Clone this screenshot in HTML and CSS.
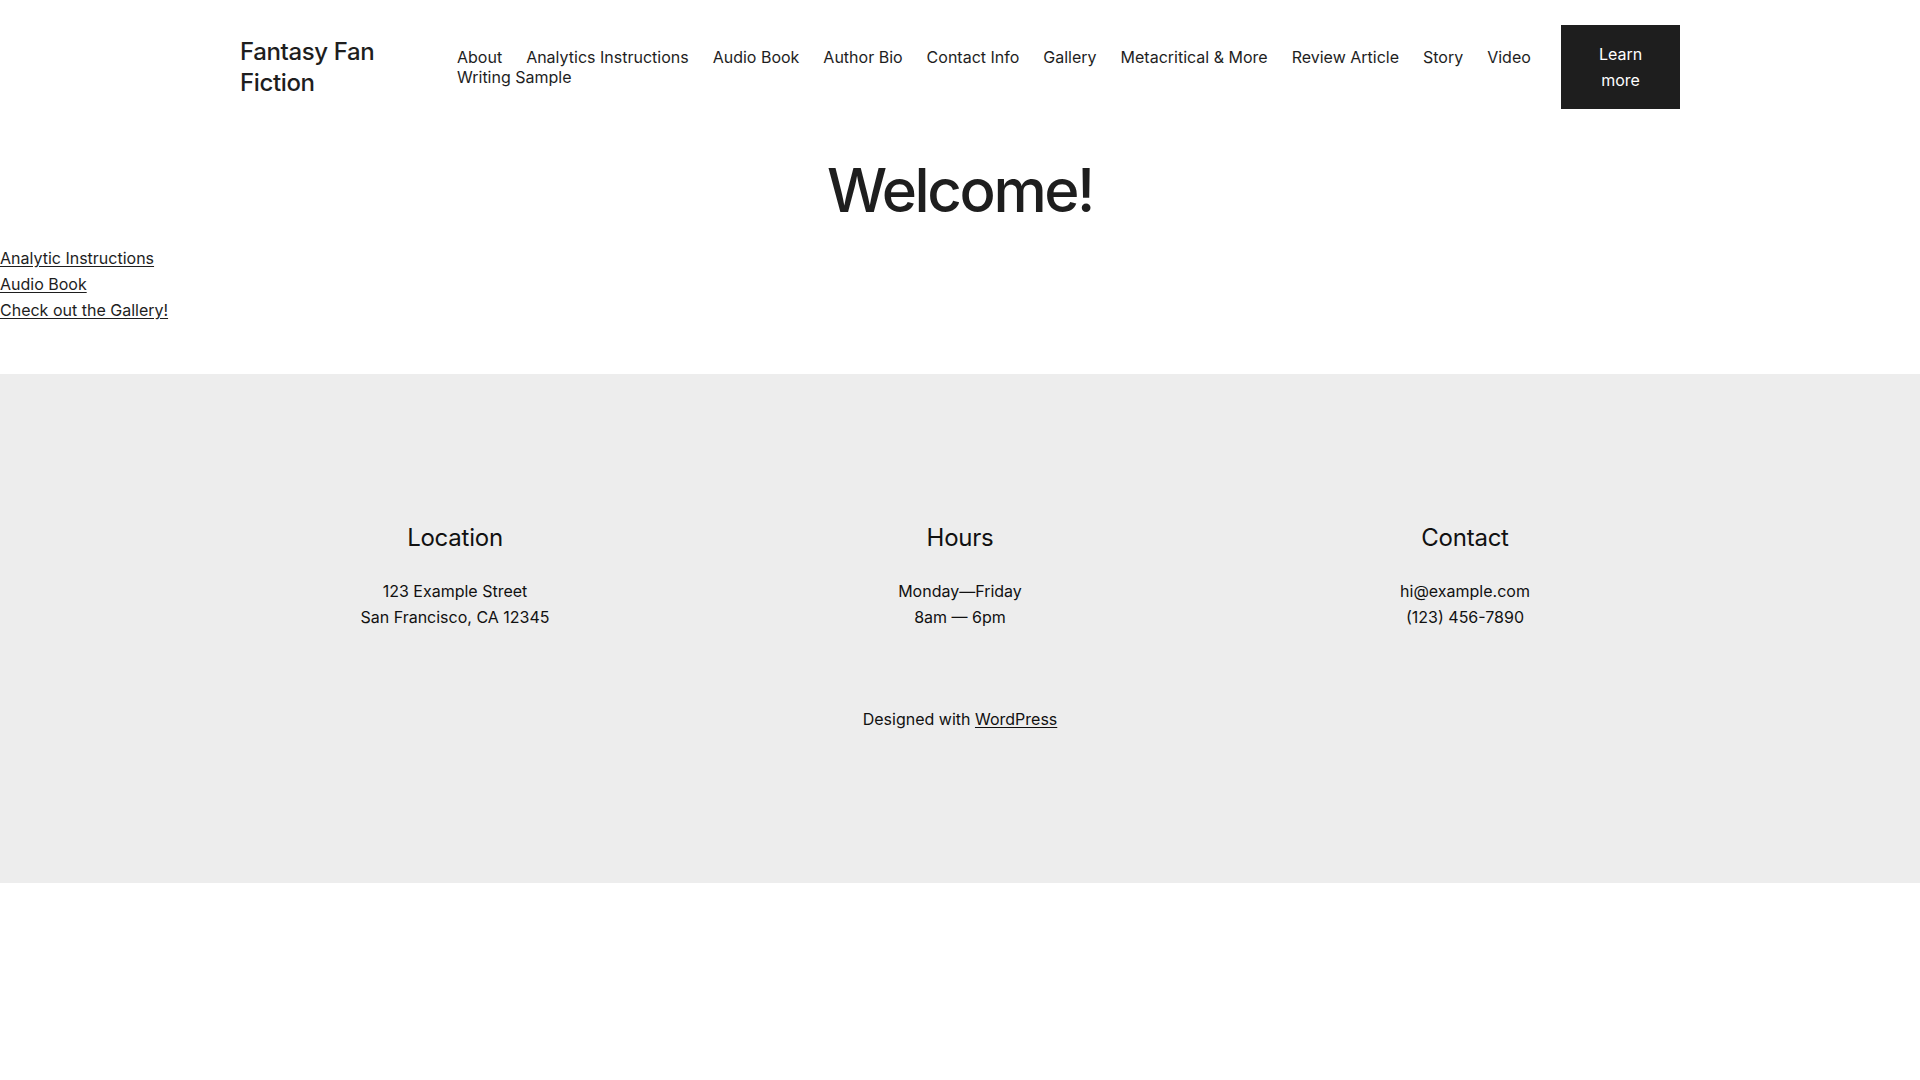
FILE: index.html
```html
<!DOCTYPE html>
<html lang="en">
<head>
<meta charset="utf-8">
<title>Fantasy Fan Fiction</title>
<link rel="stylesheet" href="styles.css">
</head>
<body>
<header class="site-header">
  <div class="header-inner">
    <a class="site-title" href="#">Fantasy Fan Fiction</a>
    <nav class="main-nav">
      <a href="#">About</a>
      <a href="#">Analytics Instructions</a>
      <a href="#">Audio Book</a>
      <a href="#">Author Bio</a>
      <a href="#">Contact Info</a>
      <a href="#">Gallery</a>
      <a href="#">Metacritical &amp; More</a>
      <a href="#">Review Article</a>
      <a href="#">Story</a>
      <a href="#">Video</a>
      <a href="#">Writing Sample</a>
    </nav>
    <a class="btn" href="#">Learn more</a>
  </div>
</header>
<main class="content">
  <h1 class="welcome">Welcome!</h1>
  <div class="link-list">
    <a href="#">Analytic Instructions</a>
    <a href="#">Audio Book</a>
    <a href="#">Check out the Gallery!</a>
  </div>
</main>
<footer class="site-footer">
  <div class="footer-cols">
    <div class="col">
      <h2>Location</h2>
      <p>123 Example Street<br>San Francisco, CA 12345</p>
    </div>
    <div class="col">
      <h2>Hours</h2>
      <p>Monday—Friday<br>8am — 6pm</p>
    </div>
    <div class="col">
      <h2>Contact</h2>
      <p>hi@example.com<br>(123) 456-7890</p>
    </div>
  </div>
  <p class="credit">Designed with <a href="#">WordPress</a></p>
</footer>
</body>
</html>
```
FILE: styles.css
```css
* { box-sizing: border-box; }
html, body { margin: 0; padding: 0; }
body {
  font-family: Inter, "Noto Sans", sans-serif;
  color: #1e1e1e;
  background: #fff;
  font-size: 16px;
  line-height: 1.6;
}
a { color: inherit; }

.site-header { padding: 25px 0 25px; }
.header-inner {
  width: 1440px;
  margin: 0 auto;
  display: flex;
  align-items: center;
}
.site-title {
  flex: 0 0 217px;
  width: 217px;
  padding-right: 60px;
  font-size: 24px;
  line-height: 31px;
  font-weight: 500;
  letter-spacing: -0.015em;
  text-decoration: none;
  color: #1e1e1e;
}
.main-nav {
  flex: 1 1 auto;
  display: flex;
  flex-wrap: wrap;
  column-gap: 24px;
  row-gap: 0;
  margin-right: 20px;
  font-size: 16px;
  line-height: 20px;
}
.main-nav a { text-decoration: none; color: #1e1e1e; }
.btn {
  flex: 0 0 119px;
  width: 119px;
  height: 84px;
  display: flex;
  align-items: center;
  justify-content: center;
  padding: 0 22px;
  text-align: center;
  background: #1e1e1e;
  color: #fff;
  text-decoration: none;
  font-size: 16px;
  line-height: 26px;
}

.content { padding-top: 20px; padding-bottom: 51px; }
.welcome {
  margin: 0;
  text-align: center;
  font-size: 60px;
  line-height: 72px;
  font-weight: 500;
  letter-spacing: -0.04em;
  color: #1e1e1e;
}
.link-list {
  margin-top: 19px;
  display: flex;
  flex-direction: column;
  align-items: flex-start;
  line-height: 26px;
}
.link-list a { text-decoration: underline; text-underline-offset: 2px; }

.site-footer {
  background: #ededed;
  padding: 149px 0 150px;
  color: #111;
}
.footer-cols {
  width: 1440px;
  margin: 0 auto;
  display: grid;
  grid-template-columns: repeat(3, 430px);
  column-gap: 75px;
  text-align: center;
}
.col h2 {
  margin: 0;
  font-size: 24px;
  line-height: 29px;
  font-weight: 400;
  letter-spacing: -0.01em;
}
.col p {
  margin: 27px 0 0;
  font-size: 16px;
  line-height: 25.5px;
}
.credit {
  margin: 77px 0 0;
  text-align: center;
  font-size: 16px;
  line-height: 25.5px;
}
.credit a { text-decoration: underline; text-underline-offset: 2px; }
```
